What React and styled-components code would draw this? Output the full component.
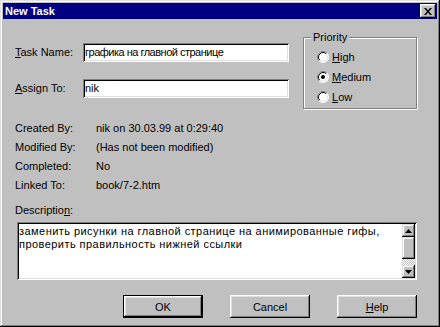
import React from 'react';
import styled, { createGlobalStyle } from 'styled-components';

const Global = createGlobalStyle`
  html, body { margin: 0; padding: 0; background: #c0c0c0; }
  body {
    font-family: "Liberation Sans", Arial, sans-serif;
    font-size: 11px;
    color: #000;
  }
  * { box-sizing: border-box; }
`;

const Window = styled.div`
  width: 440px;
  height: 327px;
  background: #c0c0c0;
  padding: 3px;
  box-shadow: inset -1px -1px #000, inset 1px 1px #dfdfdf,
    inset -2px -2px #808080, inset 2px 2px #fff;
  display: flex;
  flex-direction: column;
`;

const TitleBar = styled.div`
  height: 16px;
  background: #000080;
  color: #fff;
  font-weight: bold;
  font-size: 11px;
  display: flex;
  align-items: center;
  justify-content: space-between;
  padding: 0 1px 0 2px;
`;

const CloseButton = styled.div`
  width: 16px;
  height: 14px;
  background: #c0c0c0;
  display: flex;
  align-items: center;
  justify-content: center;
  box-shadow: inset -1px -1px #000, inset 1px 1px #fff,
    inset -2px -2px #808080, inset 2px 2px #dfdfdf;
`;

const Body = styled.div`
  display: flex;
  flex-direction: column;
  padding: 12px 20px 0 12px;
`;

const TopSection = styled.div`
  display: flex;
  align-items: flex-start;
`;

const FieldGrid = styled.div`
  display: grid;
  grid-template-columns: 68px 206px;
  row-gap: 17px;
  margin-top: 12px;
  align-items: center;
`;

const Label = styled.span`
  line-height: 13px;
  white-space: nowrap;
`;

const Input = styled.div`
  height: 19px;
  background: #fff;
  padding: 0 2px;
  line-height: 19px;
  letter-spacing: ${(p) => (p.$tight ? '-0.5px' : '0')};
  white-space: nowrap;
  overflow: hidden;
  box-shadow: inset 1px 1px #808080, inset -1px -1px #fff,
    inset 2px 2px #000, inset -2px -2px #dfdfdf;
`;

const Group = styled.div`
  position: relative;
  margin-left: auto;
  margin-top: 6px;
  width: 114px;
  height: 72px;
  border: 1px solid #808080;
  box-shadow: inset 1px 1px #fff, 1px 1px #fff;
  padding: 9px 0 0 13px;
  display: flex;
  flex-direction: column;
`;

const Legend = styled.span`
  position: absolute;
  top: -7px;
  left: 7px;
  padding: 0 2px;
  background: #c0c0c0;
  line-height: 13px;
`;

const RadioRow = styled.div`
  height: 20px;
  display: flex;
  align-items: center;
  gap: 3px;
`;

const InfoGrid = styled.div`
  display: grid;
  grid-template-columns: 81px auto;
  grid-auto-rows: 19px;
  align-items: center;
  margin-top: 9px;
`;

const DescLabel = styled.div`
  margin-top: 7px;
  line-height: 19px;
`;

const TextBox = styled.div`
  margin: 2px 0 0 2px;
  width: 400px;
  height: 58px;
  background: #fff;
  padding: 2px;
  display: flex;
  box-shadow: inset 1px 1px #808080, inset -1px -1px #fff,
    inset 2px 2px #000, inset -2px -2px #dfdfdf;
`;

const TextContent = styled.div`
  flex: 1;
  padding: 1px 1px 0 0;
  line-height: 13px;
  letter-spacing: 0.45px;
  white-space: nowrap;
  overflow: hidden;
`;

const ScrollBar = styled.div`
  width: 13px;
  display: flex;
  flex-direction: column;
`;

const ScrollButton = styled.div`
  height: ${(p) => p.$h}px;
  background: #c0c0c0;
  display: flex;
  align-items: center;
  justify-content: center;
  box-shadow: inset -1px -1px #000, inset 1px 1px #dfdfdf,
    inset -2px -2px #808080, inset 2px 2px #fff;
`;

const ScrollTrack = styled.div`
  flex: 1;
  background-color: #fff;
  background-image: repeating-conic-gradient(#c0c0c0 0 25%, #fff 0 50%);
  background-size: 2px 2px;
`;

const ButtonRow = styled.div`
  display: flex;
  justify-content: flex-end;
  gap: 27px;
  margin-top: 15px;
`;

const Button = styled.div`
  width: 80px;
  height: 23px;
  display: flex;
  align-items: center;
  justify-content: center;
  background: #c0c0c0;
  box-shadow: ${(p) =>
    p.$default
      ? 'inset -1px -1px #000, inset 1px 1px #000, inset -2px -2px #000, inset 2px 2px #fff, inset -3px -3px #808080, inset 3px 3px #dfdfdf'
      : 'inset -1px -1px #000, inset 1px 1px #fff, inset -2px -2px #808080, inset 2px 2px #dfdfdf'};
`;

const CloseIcon = () => (
  <svg width="8" height="7" viewBox="0 0 8 7">
    <path d="M0 0h2l2 2.5L6 0h2L5 3.5 8 7H6L4 4.5 2 7H0l3-3.5z" fill="#000" />
  </svg>
);

const Radio = ({ checked }) => (
  <svg width="12" height="12" viewBox="0 0 12 12">
    <circle cx="6" cy="6" r="5.5" fill="#fff" />
    <path d="M2.11 9.89A5.5 5.5 0 0 1 9.89 2.11" stroke="#808080" fill="none" />
    <path d="M9.89 2.11A5.5 5.5 0 0 1 2.11 9.89" stroke="#fff" fill="none" />
    <path d="M2.82 9.18A4.5 4.5 0 0 1 9.18 2.82" stroke="#000" fill="none" />
    <path d="M9.18 2.82A4.5 4.5 0 0 1 2.82 9.18" stroke="#dfdfdf" fill="none" />
    {checked && <circle cx="6" cy="6" r="2" fill="#000" />}
  </svg>
);

const Arrow = ({ down }) => (
  <svg width="7" height="4" viewBox="0 0 7 4">
    <path d={down ? 'M0 0h7L3.5 4z' : 'M3.5 0L7 4H0z'} fill="#000" />
  </svg>
);

export default function App() {
  return (
    <>
      <Global />
      <Window>
        <TitleBar>
          <span>New Task</span>
          <CloseButton>
            <CloseIcon />
          </CloseButton>
        </TitleBar>
        <Body>
          <TopSection>
            <FieldGrid>
              <Label>
                <u>T</u>ask Name:
              </Label>
              <Input $tight>графика на главной странице</Input>
              <Label>
                <u>A</u>ssign To:
              </Label>
              <Input>nik</Input>
            </FieldGrid>
            <Group>
              <Legend>Priority</Legend>
              <RadioRow>
                <Radio />
                <span>
                  <u>H</u>igh
                </span>
              </RadioRow>
              <RadioRow>
                <Radio checked />
                <span>
                  <u>M</u>edium
                </span>
              </RadioRow>
              <RadioRow>
                <Radio />
                <span>
                  <u>L</u>ow
                </span>
              </RadioRow>
            </Group>
          </TopSection>
          <InfoGrid>
            <span>Created By:</span>
            <span>nik on 30.03.99 at 0:29:40</span>
            <span>Modified By:</span>
            <span>(Has not been modified)</span>
            <span>Completed:</span>
            <span>No</span>
            <span>Linked To:</span>
            <span>book/7-2.htm</span>
          </InfoGrid>
          <DescLabel>
            Descriptio<u>n</u>:
          </DescLabel>
          <TextBox>
            <TextContent>
              заменить рисунки на главной странице на анимированные гифы,
              <br />
              проверить правильность нижней ссылки
            </TextContent>
            <ScrollBar>
              <ScrollButton $h={13}>
                <Arrow />
              </ScrollButton>
              <ScrollButton $h={22} />
              <ScrollTrack />
              <ScrollButton $h={13}>
                <Arrow down />
              </ScrollButton>
            </ScrollBar>
          </TextBox>
          <ButtonRow>
            <Button $default>OK</Button>
            <Button>Cancel</Button>
            <Button>
              <u>H</u>elp
            </Button>
          </ButtonRow>
        </Body>
      </Window>
    </>
  );
}
